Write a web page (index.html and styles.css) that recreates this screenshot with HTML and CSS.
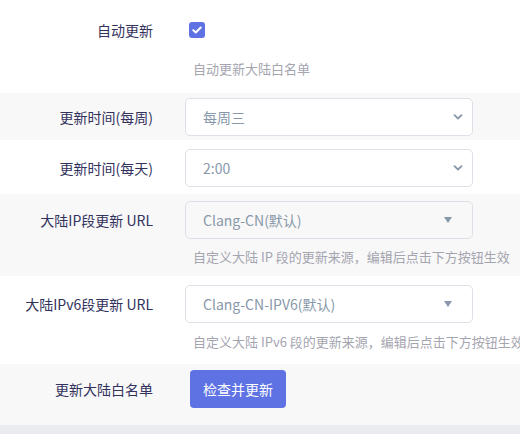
FILE: index.html
```html
<!DOCTYPE html>
<html lang="zh-CN">
<head>
<meta charset="utf-8">
<title>大陆白名单</title>
<link rel="stylesheet" href="styles.css">
</head>
<body>
<div class="section">
  <div class="row r1">
    <div class="label">自动更新</div>
    <div class="field">
      <div class="line">
        <span class="checkbox">
          <svg width="10" height="8" viewBox="0 0 10 8"><path d="M1.3 4.2 L3.8 6.5 L8.7 1.5" fill="none" stroke="#fff" stroke-width="2" stroke-linecap="round" stroke-linejoin="round"/></svg>
        </span>
      </div>
      <div class="desc">自动更新大陆白名单</div>
    </div>
  </div>
  <div class="row r2 alt">
    <div class="label">更新时间(每周)</div>
    <div class="field">
      <div class="select">
        <span class="value">每周三</span>
        <svg class="chev" width="10" height="6" viewBox="0 0 10 6"><path d="M1.5 1.2 L5 4.5 L8.5 1.2" fill="none" stroke="#8898aa" stroke-width="1.8" stroke-linecap="round" stroke-linejoin="round"/></svg>
      </div>
    </div>
  </div>
  <div class="row r3">
    <div class="label">更新时间(每天)</div>
    <div class="field">
      <div class="select">
        <span class="value">2:00</span>
        <svg class="chev" width="10" height="6" viewBox="0 0 10 6"><path d="M1.5 1.2 L5 4.5 L8.5 1.2" fill="none" stroke="#8898aa" stroke-width="1.8" stroke-linecap="round" stroke-linejoin="round"/></svg>
      </div>
    </div>
  </div>
  <div class="row r4 alt">
    <div class="label">大陆IP段更新 URL</div>
    <div class="field">
      <div class="select dropdown">
        <span class="value">Clang-CN(默认)</span>
        <svg class="tri" width="8" height="6" viewBox="0 0 8 6"><path d="M0 0 H8 L4 6 Z" fill="#8898aa"/></svg>
      </div>
      <div class="desc">自定义大陆 IP 段的更新来源，编辑后点击下方按钮生效</div>
    </div>
  </div>
  <div class="row r5">
    <div class="label">大陆IPv6段更新 URL</div>
    <div class="field">
      <div class="select dropdown">
        <span class="value">Clang-CN-IPV6(默认)</span>
        <svg class="tri" width="8" height="6" viewBox="0 0 8 6"><path d="M0 0 H8 L4 6 Z" fill="#8898aa"/></svg>
      </div>
      <div class="desc">自定义大陆 IPv6 段的更新来源，编辑后点击下方按钮生效</div>
    </div>
  </div>
  <div class="row r6 alt">
    <div class="label">更新大陆白名单</div>
    <div class="field">
      <button class="btn">检查并更新</button>
    </div>
  </div>
</div>
<div class="footer-band"></div>
</body>
</html>
```
FILE: styles.css
```css
html, body {
  margin: 0;
  padding: 0;
  overflow: hidden;
  background: #fff;
}
body {
  font-family: "Noto Sans", "Noto Sans CJK SC", sans-serif;
  font-size: 14px;
  color: #32325d;
}
.section {
  display: flex;
  flex-direction: column;
}
.row {
  display: flex;
  align-items: flex-start;
  background: #fff;
}
.row.alt {
  background: #f8f8f8;
}
.label {
  width: 153px;
  flex: none;
  text-align: right;
  line-height: 38px;
  padding-right: 32px;
  white-space: nowrap;
  font-family: "Noto Sans CJK SC", sans-serif;
  color: #32325d;
}
.field {
  flex: none;
  display: flex;
  flex-direction: column;
}
.line {
  height: 38px;
  display: flex;
  align-items: center;
  padding-left: 4px;
}
.checkbox {
  width: 16px;
  height: 16px;
  border-radius: 3px;
  background: #5e72e4;
  display: flex;
  align-items: center;
  justify-content: center;
}
.desc {
  font-family: "Noto Sans CJK SC", sans-serif;
  font-size: 13px;
  line-height: 20px;
  color: #a5a5b0;
  padding-left: 8px;
  white-space: nowrap;
}
.r1 { padding: 11px 0 14px; }
.r1 .desc { margin-top: 10px; }
.r2 { padding: 5px 0 4px; }
.r3 { padding: 9px 0 7px; }
.r4 { padding: 7px 0 9px; }
.r4 .desc { margin-top: 8px; }
.r5 { padding: 9px 0 12px; }
.r5 .desc { margin-top: 9px; }
.r6 { padding: 6px 0 17px; }
.select {
  box-sizing: border-box;
  width: 288px;
  height: 38px;
  border: 1px solid #dde0e6;
  border-radius: 5px;
  background: #fff;
  display: flex;
  align-items: center;
  justify-content: space-between;
  padding: 0 9px 0 17px;
}
.select.dropdown {
  background: transparent;
  padding-right: 20px;
}
.value {
  font-family: "Noto Sans CJK SC", sans-serif;
  font-size: 14px;
  color: #8898aa;
  white-space: nowrap;
}
.btn {
  margin-left: 5px;
  width: 96px;
  height: 38px;
  border: none;
  border-radius: 4px;
  background: #5e72e4;
  color: #fff;
  font-family: "Noto Sans CJK SC", sans-serif;
  font-size: 14px;
  padding: 0;
}
.footer-band {
  height: 9px;
  background: #e9ebef;
}
```
